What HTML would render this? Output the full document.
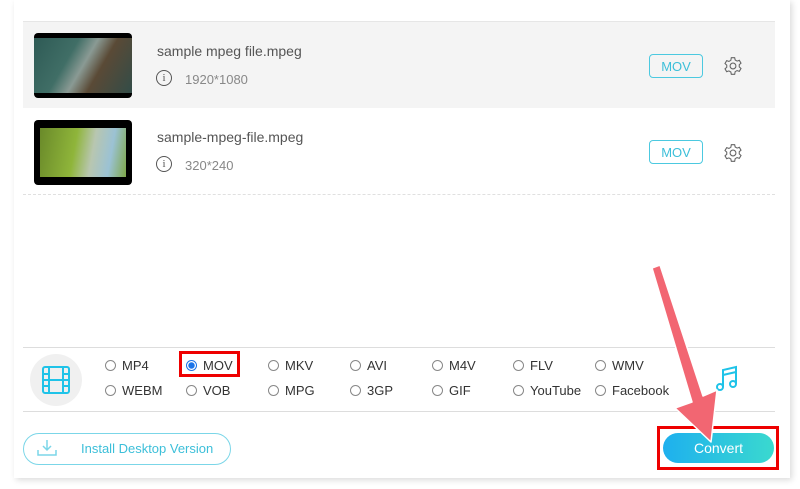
<!DOCTYPE html>
<html><head><style>
body{margin:0;width:800px;height:489px;background:#fff;font-family:"Liberation Sans",sans-serif;position:relative;overflow:hidden}
.panel{position:absolute;left:14px;top:0;width:776px;height:478px;background:#fff;box-shadow:2px 2px 6px rgba(0,0,0,.15)}
.abs{position:absolute}
.row{position:absolute;left:23px;width:752px;height:86px}
.thumb{position:absolute;left:11px;width:98px;height:65px;background:#000;border-radius:4px;overflow:hidden}
.name{position:absolute;left:134px;font-size:14px;color:#555}
.res{position:absolute;left:162px;font-size:13px;color:#888}
.info{position:absolute;left:133px;width:14px;height:14px;border:1px solid #555;border-radius:50%;font-size:11px;line-height:14px;text-align:center;color:#555;font-family:"Liberation Serif",serif}
.mov{position:absolute;left:626px;width:54px;height:24px;border:1px solid #4cc9e0;border-radius:4px;color:#3cbfd9;font-size:13px;text-align:center;line-height:24px;box-sizing:border-box}
.opt{position:absolute;font-size:13px;color:#333}
.opt i{display:inline-block;width:9px;height:9px;border:1px solid #888;border-radius:50%;margin-right:6px;vertical-align:-1px}
</style></head><body>
<div class="panel"></div>
<div class="abs" style="left:23px;top:21px;width:752px;height:1px;background:#e6e6e6"></div>
<div class="row" style="top:22px;background:#f4f4f4">
 <div class="thumb" style="top:11px"><div style="position:absolute;left:0;top:5px;width:98px;height:55px;background:linear-gradient(120deg,#2e5a55,#406e66 35%,#8a9a94 50%,#5a4a36 65%,#324c48)"></div></div>
 <div class="name" style="top:21px">sample mpeg file.mpeg</div>
 <div class="info" style="top:48px">i</div><div class="res" style="top:50px">1920*1080</div>
 <div class="mov" style="top:32px">MOV</div>
</div>
<div class="row" style="top:108px;border-bottom:1px dashed #e0e0e0">
 <div class="thumb" style="top:12px"><div style="position:absolute;left:6px;top:8px;width:86px;height:49px;background:linear-gradient(100deg,#6a8a2a,#8fb53a 40%,#b8c6b0 60%,#9bc2d4 80%,#7fa84a)"></div></div>
 <div class="name" style="top:21px">sample-mpeg-file.mpeg</div>
 <div class="info" style="top:48px">i</div><div class="res" style="top:50px">320*240</div>
 <div class="mov" style="top:32px">MOV</div>
</div>
<svg class="abs" style="left:723px;top:56px" width="20" height="20" viewBox="0 0 24 24" fill="none" stroke="#666" stroke-width="1.3"><circle cx="12" cy="12" r="3.5"/><path d="M10 2h4l.6 2.8 2.3 1.3 2.7-.9 2 3.4-2.1 1.9v2.6l2.1 1.9-2 3.4-2.7-.9-2.3 1.3L14 22h-4l-.6-2.8-2.3-1.3-2.7.9-2-3.4 2.1-1.9v-2.6L2.4 9l2-3.4 2.7.9 2.3-1.3z"/></svg>
<svg class="abs" style="left:723px;top:143px" width="20" height="20" viewBox="0 0 24 24" fill="none" stroke="#666" stroke-width="1.3"><circle cx="12" cy="12" r="3.5"/><path d="M10 2h4l.6 2.8 2.3 1.3 2.7-.9 2 3.4-2.1 1.9v2.6l2.1 1.9-2 3.4-2.7-.9-2.3 1.3L14 22h-4l-.6-2.8-2.3-1.3-2.7.9-2-3.4 2.1-1.9v-2.6L2.4 9l2-3.4 2.7.9 2.3-1.3z"/></svg>

<div class="abs" style="left:23px;top:347px;width:752px;height:1px;background:#ddd"></div>
<div class="abs" style="left:23px;top:411px;width:752px;height:1px;background:#ddd"></div>
<div class="abs" style="left:30px;top:354px;width:52px;height:52px;border-radius:50%;background:#f0f0f0"></div>
<svg class="abs" style="left:41px;top:365px" width="30" height="30" viewBox="0 0 30 30" fill="none" stroke="#1fc3e8" stroke-width="2"><rect x="2" y="2" width="26" height="26" rx="2"/><path d="M8 2v26M22 2v26M2 9h6M2 15h26M2 21h6M22 9h6M22 21h6"/></svg>
<div class="opt" style="left:105px;top:358px"><i></i>MP4</div>
<div class="opt" style="left:186px;top:358px"><i style="border-color:#1a73e8;background:radial-gradient(#1a73e8 45%,#fff 55%)"></i>MOV</div>
<div class="opt" style="left:268px;top:358px"><i></i>MKV</div>
<div class="opt" style="left:350px;top:358px"><i></i>AVI</div>
<div class="opt" style="left:432px;top:358px"><i></i>M4V</div>
<div class="opt" style="left:513px;top:358px"><i></i>FLV</div>
<div class="opt" style="left:595px;top:358px"><i></i>WMV</div>
<div class="opt" style="left:105px;top:383px"><i></i>WEBM</div>
<div class="opt" style="left:186px;top:383px"><i></i>VOB</div>
<div class="opt" style="left:268px;top:383px"><i></i>MPG</div>
<div class="opt" style="left:350px;top:383px"><i></i>3GP</div>
<div class="opt" style="left:432px;top:383px"><i></i>GIF</div>
<div class="opt" style="left:513px;top:383px"><i></i>YouTube</div>
<div class="opt" style="left:595px;top:383px"><i></i>Facebook</div>
<div class="abs" style="left:179px;top:351px;width:61px;height:26px;border:3px solid #e00;box-sizing:border-box"></div>
<svg class="abs" style="left:714px;top:365px" width="26" height="28" viewBox="0 0 26 28" fill="none" stroke="#1fc3e8" stroke-width="2"><path d="M9 22V5l13-3v17M9 10l13-3"/><circle cx="6" cy="22" r="3"/><circle cx="19" cy="19" r="3"/></svg>

<div class="abs" style="left:23px;top:433px;width:208px;height:32px;border:1px solid #7bd6e8;border-radius:17px;box-sizing:border-box"></div>
<svg class="abs" style="left:36px;top:439px" width="22" height="18" viewBox="0 0 22 18" fill="none" stroke="#7bd6e8" stroke-width="1.5"><path d="M11 1v10M7 7l4 4 4-4M2 11v5h18v-5"/></svg>
<div class="abs" style="left:81px;top:441px;font-size:13px;color:#3cbfd9">Install Desktop Version</div>

<div class="abs" style="left:657px;top:426px;width:122px;height:44px;border:3px solid #e00;box-sizing:border-box"></div>
<div class="abs" style="left:663px;top:433px;width:111px;height:30px;border-radius:15px;background:linear-gradient(90deg,#1eb0ee,#3ad9cf);color:#fff;font-size:14px;text-align:center;line-height:30px">Convert</div>
<svg class="abs" style="left:0;top:0" width="800" height="489"><polygon points="652,268 660,265 703,396 717,390 711,442 675,408 692,402" fill="#f26672" stroke="#fff" stroke-width="1.5" stroke-linejoin="round"/></svg>
</body></html>
